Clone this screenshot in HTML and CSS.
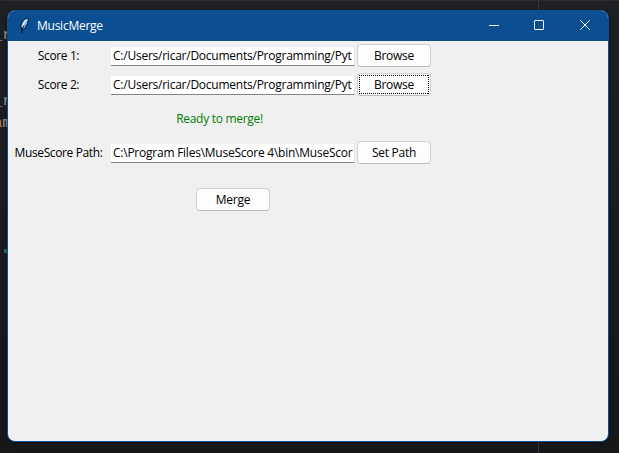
FILE: index.html
```html
<!DOCTYPE html>
<html lang="en">
<head>
<meta charset="utf-8">
<title>MusicMerge</title>
<link rel="stylesheet" href="styles.css">
</head>
<body>
<div class="editor" aria-hidden="true">
  <span class="code code-a">_r</span>
  <span class="code code-b">_r</span>
  <span class="code code-c"><i>a</i>m</span>
  <span class="code-mark"></span>
  <span class="ruler"></span>
</div>
<main class="window">
  <header class="titlebar">
    <svg class="feather" width="11" height="18" viewBox="0 0 11 18">
      <path d="M2.6 13.5V11L1.6 9.5 2.5 6 5 2.6 8.6 1 9.4 2.2 8.6 6.5 6.3 10.8 4 12.5Z" fill="#76afe8" stroke="#071020" stroke-width="1"/>
      <path d="M3.8 9.5 5 6 7.8 2.6" fill="none" stroke="#d9eeff" stroke-width="1.5"/>
      <path d="M2.7 16 3.4 12 5 8.5" fill="none" stroke="#071020" stroke-width="1"/>
    </svg>
    <h1 class="title">MusicMerge</h1>
    <div class="controls">
      <svg width="46" height="30" viewBox="0 0 46 30"><path d="M18 15.5H28"/></svg>
      <svg width="46" height="30" viewBox="0 0 46 30"><rect x="17.5" y="10.5" width="9" height="9" rx=".6"/></svg>
      <svg width="46" height="30" viewBox="0 0 46 30"><path d="M17.3 10.3 26.7 19.7M26.7 10.3 17.3 19.7"/></svg>
    </div>
  </header>
  <form class="form">
    <label class="label">Score 1:</label>
    <div class="entry"><span class="path">C:/Users/ricar/Documents/Programming/Pyt</span></div>
    <button type="button" class="button">Browse</button>

    <label class="label">Score 2:</label>
    <div class="entry"><span class="path">C:/Users/ricar/Documents/Programming/Pyt</span></div>
    <button type="button" class="button focused">Browse</button>

    <p class="status">Ready to merge!</p>

    <label class="label">MuseScore Path:</label>
    <div class="entry"><span class="path">C:\Program Files\MuseScore 4\bin\MuseScor</span></div>
    <button type="button" class="button">Set Path</button>

    <button type="button" class="button merge">Merge</button>
  </form>
</main>
</body>
</html>
```
FILE: styles.css
```css
* { box-sizing: border-box; }
body {
  margin: 0;
  width: 619px;
  height: 453px;
  padding: 9px 10px 12px 7px;
  overflow: hidden;
  position: relative;
  background: linear-gradient(#1f2124, #1a1c1e 50%, #17181a);
  border-top: 1px solid #2a2c2f;
  font: 12px/16px "Open Sans", "Noto Sans", sans-serif;
  color: #000;
}
.code {
  position: absolute;
  left: -6px;
  font: 14px/16px "Liberation Mono", monospace;
  color: #a4a6aa;
}
.code i { font-style: normal; color: #b98450; }
.code-a { top: 26px; }
.code-b { top: 92px; }
.code-c { top: 114px; }
.code-mark { position: absolute; left: 4px; top: 248px; width: 4px; height: 4px; background: #2f6b57; }
.ruler { position: absolute; left: 538px; top: 0; width: 1px; height: 453px; background: #36383b; }
.window {
  position: relative;
  height: 432px;
  width: 602px;
  border: 1px solid #0b4f92;
  border-radius: 8px;
  background: #f0f0f0;
  overflow: hidden;
  box-shadow: 0 3px 8px rgba(0, 0, 0, .3);
}
.titlebar {
  height: 30px;
  display: flex;
  align-items: center;
  padding-left: 11px;
  background: #0b4f92;
  color: #fff;
}
.feather { margin-top: -1px; }
.title { margin: 0 auto 0 7px; font-size: 12px; font-weight: 400; letter-spacing: -.25px; }
.controls { display: flex; height: 30px; margin: -2px -1px 0 0; }
.controls svg { fill: none; stroke: #fff; stroke-width: 1; }
.form {
  display: grid;
  grid-template-columns: 103px 244px 76px;
  grid-template-rows: 23px 23px 33px 23px 41px;
  row-gap: 6px;
  padding-top: 3px;
  align-items: center;
}
.label { text-align: center; padding-right: 2px; letter-spacing: -.38px; white-space: nowrap; }
.entry {
  height: 20px;
  padding: 1px 0 0 2px;
  margin-top: 1px;
  background: #fff;
  border-bottom: 1px solid #858585;
  border-right: 1px solid #e8e8e8;
  border-top: 1px solid #ececec;
}
.path { display: block; width: 240px; overflow: hidden; white-space: nowrap; letter-spacing: -.24px; }
.button {
  position: relative;
  width: 74px;
  height: 23px;
  margin-left: 2px;
  padding: 0;
  border: 1px solid #d0d0d0;
  border-bottom-color: #bcbcbc;
  border-radius: 4px;
  background: #fdfdfd;
  color: #000;
  font: inherit;
  letter-spacing: -.25px;
}
.focused::after {
  content: "";
  position: absolute;
  inset: 1px;
  background:
    repeating-linear-gradient(90deg, #000 0 1px, transparent 1px 2px) top / 100% 1px no-repeat,
    repeating-linear-gradient(90deg, #000 0 1px, transparent 1px 2px) bottom / 100% 1px no-repeat,
    repeating-linear-gradient(#000 0 1px, transparent 1px 2px) left / 1px 100% no-repeat,
    repeating-linear-gradient(#000 0 1px, transparent 1px 2px) right / 1px 100% no-repeat;
}
.status { grid-column: 1 / 4; margin: 0; text-align: center; color: #008000; letter-spacing: -.3px; }
.merge { grid-column: 2; justify-self: center; align-self: end; margin-left: 0; }
```
